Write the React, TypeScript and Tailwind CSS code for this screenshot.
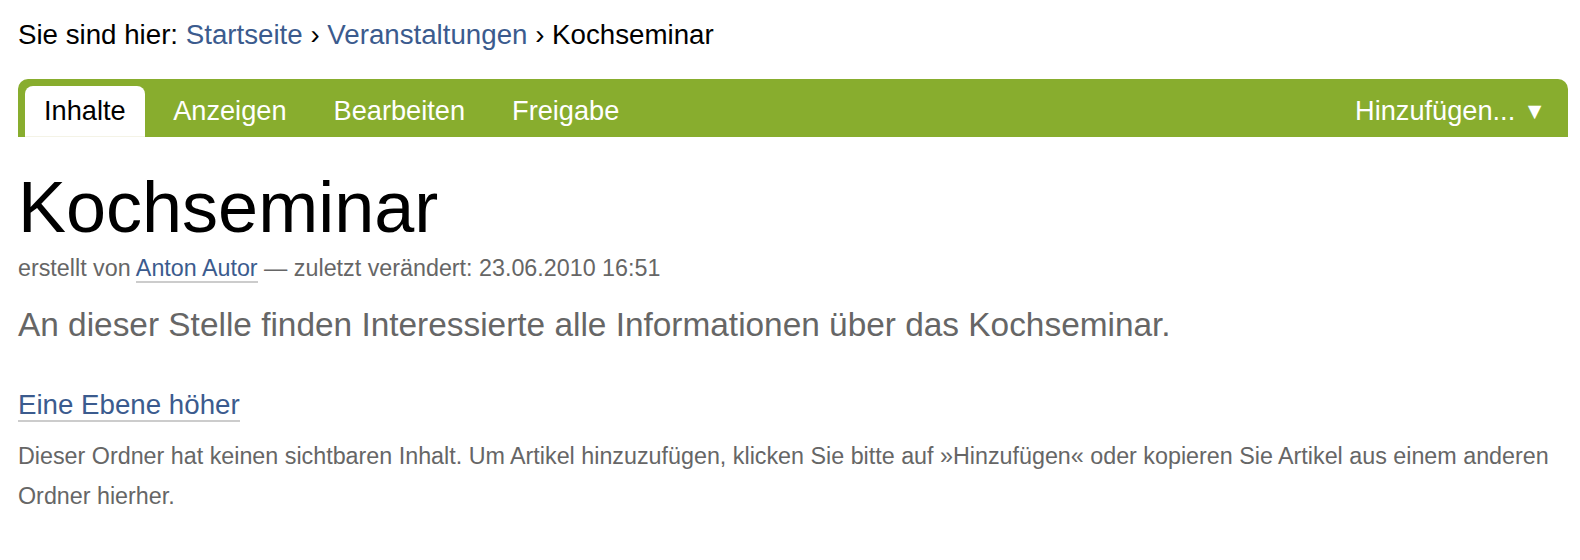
import React from 'react';

const tabs = ['Inhalte', 'Anzeigen', 'Bearbeiten', 'Freigabe'];

const App: React.FC = () => {
  return (
    <div className="min-h-[560px] bg-white pl-[18px] pr-3 pt-[19px] font-['Liberation_Sans',Arial,sans-serif]">
      <div className="text-[27.7px] leading-[32px] text-black">
        Sie sind hier: <a className="text-[#3b5b8e]">Startseite</a> › <a className="text-[#3b5b8e]">Veranstaltungen</a> › Kochseminar
      </div>

      <div className="mt-[28px] flex h-[58px] items-end justify-between rounded-t-[10px] bg-[#88ad2e] pl-[7px] pr-[22px]">
        <div className="flex items-end">
          {tabs.map((tab, i) =>
            i === 0 ? (
              <div key={tab} className="mr-[5px] flex h-[51px] items-center rounded-t-[8px] border-b border-[#f4f3e6] bg-white px-[19px] text-[27.2px] text-black">
                {tab}
              </div>
            ) : (
              <div key={tab} className="flex h-[51px] items-center px-[23.5px] text-[27.2px] text-white">
                {tab}
              </div>
            )
          )}
        </div>
        <div className="flex h-[51px] items-center text-[27.2px] text-white">
          Hinzufügen... <span className="ml-[8px] text-[23px]">▼</span>
        </div>
      </div>

      <h1 className="mt-[30px] text-[72px] leading-[80px] text-black">Kochseminar</h1>
      <div className="mt-[6px] text-[23.3px] leading-[30px] text-[#666]">
        erstellt von <a className="border-b-2 border-[#ccc] text-[#3b5b8e]">Anton Autor</a> — zuletzt verändert: 23.06.2010 16:51
      </div>
      <p className="mt-[22px] text-[33.4px] leading-[40px] text-[#666]">
        An dieser Stelle finden Interessierte alle Informationen über das Kochseminar.
      </p>

      <div className="mt-[42px] text-[27.7px] leading-[36px]">
        <a className="border-b-2 border-[#ccc] text-[#3b5b8e]">Eine Ebene höher</a>
      </div>
      <p className="mt-[13px] text-[23.3px] leading-[40px] text-[#666]">
        Dieser Ordner hat keinen sichtbaren Inhalt. Um Artikel hinzuzufügen, klicken Sie bitte auf »Hinzufügen« oder kopieren Sie Artikel aus einem anderen Ordner hierher.
      </p>
    </div>
  );
};

export default App;
